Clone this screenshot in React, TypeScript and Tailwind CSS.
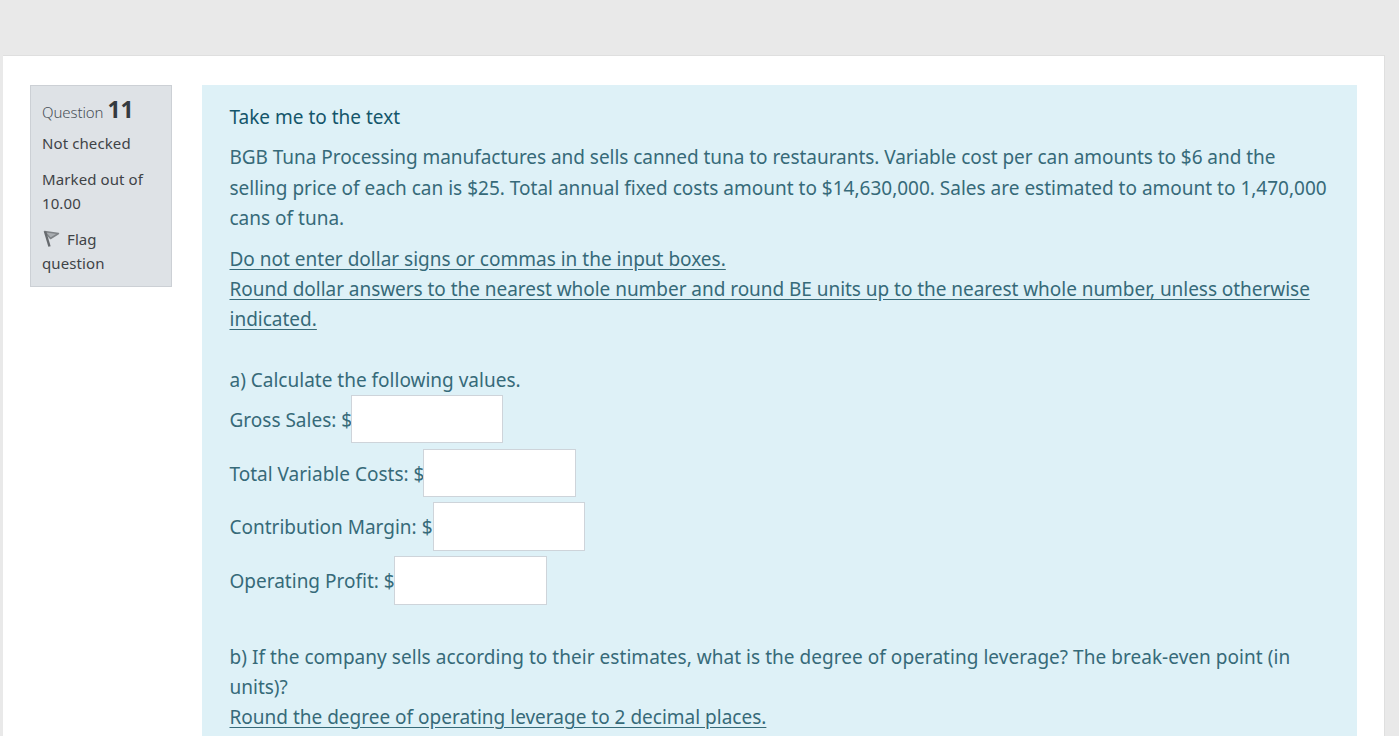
import React from "react";

function Field({ label, h, mt, w, gap }: { label: string; h: string; w: string; mt: string; gap: string }) {
  return (
    <div className={`flex items-center ${h} ${mt}`}>
      <span className={gap}>{label}</span>
      <span className={`block ${h} bg-white border border-[#ced4da] ${w}`} />
    </div>
  );
}

export default function App() {
  return (
    <div className="h-[736px] overflow-hidden bg-[#e9e9e9] pt-[55px] pl-[3px] pr-[14px] font-['Noto_Sans','Open_Sans',sans-serif]">
      <div className="h-[700px] bg-white border-t border-r border-[#dfdfdf] flex items-start pt-[29px] pl-[27px] pr-[27px] gap-[30px]">
        <div className="w-[142px] h-[202px] shrink-0 bg-[#dee2e6] border border-[#ccd0d5] pl-[11px] pt-[10px] text-[15px] leading-[24px] text-[#3f4347] tracking-[0.1px]">
          <div className="flex items-baseline h-[30px] font-light text-[#495057] tracking-normal translate-y-[1px]">
            <span className="tracking-[-0.1px]">Question</span>
            <span className="ml-[4px] text-[23px] font-bold text-[#343a40]">11</span>
          </div>
          <div className="mt-[5px]">Not checked</div>
          <div className="mt-[12px]">Marked out of<br />10.00</div>
          <div className="mt-[12px]">
            <span className="inline-flex items-center gap-[7px]">
              <svg width="18" height="18" viewBox="0 0 18 18" fill="none">
                <path d="M2.5 1.5 L16.5 3.5 L8.5 8.5 Z" stroke="#7f8387" strokeWidth="1.5" fill="#a9adb1" strokeLinejoin="round" />
                <path d="M3 1.5 L7.5 16.5" stroke="#666a6e" strokeWidth="2.4" />
              </svg>
              <span>Flag</span>
            </span>
            <div className="-mt-[3px]">question</div>
          </div>
        </div>
        <div className="flex-1 h-[680px] bg-[#def1f7] pl-[27.5px] pt-[17px] text-[19px] leading-[30.4px] text-[#366a79] whitespace-nowrap">
          <div className="text-[#14566b]">Take me to the text</div>
          <div className="mt-[10px]">
            <span className="tracking-[-0.045px]">BGB Tuna Processing manufactures and sells canned tuna to restaurants. Variable cost per can amounts to $6 and the</span><br />
            selling price of each can is $25. Total annual fixed costs amount to $14,630,000. Sales are estimated to amount to 1,470,000<br />
            cans of tuna.
          </div>
          <div className="mt-[10px] underline underline-offset-[3px]">
            Do not enter dollar signs or commas in the input boxes.<br />
            <span className="tracking-[-0.04px]">Round dollar answers to the nearest whole number and round BE units up to the nearest whole number, unless otherwise</span><br />
            indicated.
          </div>
          <div className="mt-[30px]">a) Calculate the following values.</div>
          <Field label="Gross Sales: $" h="h-[48px]" w="w-[152px]" mt="mt-0" gap="pt-[2px] -mr-[1px]" />
          <Field label="Total Variable Costs: $" h="h-[48px]" w="w-[153px]" mt="mt-[6px]" gap="pt-[2px] -mr-[1px]" />
          <Field label="Contribution Margin: $" h="h-[49px]" w="w-[152px]" mt="mt-[5px]" gap="pt-[1px] mr-0" />
          <Field label="Operating Profit: $" h="h-[49px]" w="w-[153px]" mt="mt-[5px]" gap="pt-[1px] -mr-[1px]" />
          <div className="mt-[36.4px]">
            <span className="tracking-[0.04px]">b) If the company sells according to their estimates, what is the degree of operating leverage? The break-even point (in</span><br />
            units)?<br />
            <span className="underline underline-offset-[3px]">Round the degree of operating leverage to 2 decimal places.</span>
          </div>
        </div>
      </div>
    </div>
  );
}
